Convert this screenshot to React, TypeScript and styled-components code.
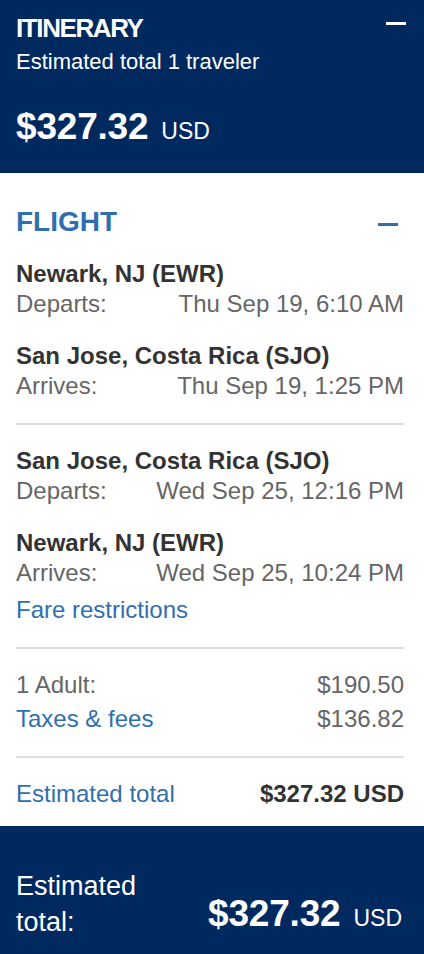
import React from 'react'
import styled, { createGlobalStyle } from 'styled-components'

const NAVY = '#002a5f'
const BLUE = '#2f6fad'

const GlobalStyle = createGlobalStyle`
  html, body {
    margin: 0;
    padding: 0;
    background: #ffffff;
  }
  body {
    font-family: "Liberation Sans", Arial, Helvetica, sans-serif;
  }
`

type Leg = {
  city: string
  label: string
  time: string
}

type Segment = Leg[]

const SEGMENTS: Segment[] = [
  [
    { city: 'Newark, NJ (EWR)', label: 'Departs:', time: 'Thu Sep 19, 6:10 AM' },
    { city: 'San Jose, Costa Rica (SJO)', label: 'Arrives:', time: 'Thu Sep 19, 1:25 PM' }
  ],
  [
    { city: 'San Jose, Costa Rica (SJO)', label: 'Departs:', time: 'Wed Sep 25, 12:16 PM' },
    { city: 'Newark, NJ (EWR)', label: 'Arrives:', time: 'Wed Sep 25, 10:24 PM' }
  ]
]

function App (): React.ReactElement {
  return (
    <>
      <GlobalStyle />
      <StyledPage>
        <StyledHeader>
          <StyledTitleRow>
            <StyledTitle>ITINERARY</StyledTitle>
            <StyledMinus $color="#ffffff" $top={9} $right={0} />
          </StyledTitleRow>
          <StyledSubtitle>Estimated total 1 traveler</StyledSubtitle>
          <StyledPrice>
            <StyledAmount>$327.32</StyledAmount>
            <StyledCurrency>USD</StyledCurrency>
          </StyledPrice>
        </StyledHeader>

        <StyledBody>
          <StyledTitleRow>
            <StyledSectionTitle>FLIGHT</StyledSectionTitle>
            <StyledMinus $color={BLUE} $top={17} $right={6} />
          </StyledTitleRow>

          {SEGMENTS.map((segment, i) => (
            <React.Fragment key={i}>
              {i > 0 && <StyledDivider />}
              <StyledSegment>
                {segment.map((leg) => (
                  <div key={leg.label}>
                    <StyledCity>{leg.city}</StyledCity>
                    <StyledRow>
                      <StyledMuted>{leg.label}</StyledMuted>
                      <StyledMuted>{leg.time}</StyledMuted>
                    </StyledRow>
                  </div>
                ))}
              </StyledSegment>
            </React.Fragment>
          ))}
          <StyledFareLink href="#">Fare restrictions</StyledFareLink>

          <StyledDivider />
          <StyledPriceList>
            <StyledRow>
              <StyledMuted>1 Adult:</StyledMuted>
              <StyledMuted>$190.50</StyledMuted>
            </StyledRow>
            <StyledRow>
              <StyledLink href="#">Taxes &amp; fees</StyledLink>
              <StyledMuted>$136.82</StyledMuted>
            </StyledRow>
          </StyledPriceList>
          <StyledDivider />
          <StyledRow>
            <StyledLink href="#">Estimated total</StyledLink>
            <StyledStrong>$327.32 USD</StyledStrong>
          </StyledRow>
        </StyledBody>

        <StyledFooter>
          <StyledFooterLabel>Estimated total:</StyledFooterLabel>
          <StyledFooterPrice>
            <StyledAmount>$327.32</StyledAmount>
            <StyledCurrency>USD</StyledCurrency>
          </StyledFooterPrice>
        </StyledFooter>
      </StyledPage>
    </>
  )
}

export default App

const StyledPage = styled.div`
  width: 424px;
  min-height: 954px;
  display: flex;
  flex-direction: column;
  background: #ffffff;
`
const StyledHeader = styled.header`
  background: ${NAVY};
  color: #ffffff;
  padding: 13px 18px 24px 16px;
`
const StyledTitleRow = styled.div`
  display: flex;
  justify-content: space-between;
  align-items: flex-start;
`
const StyledTitle = styled.h1`
  margin: 0;
  font-size: 26px;
  line-height: 30px;
  font-weight: 700;
  letter-spacing: -1.4px;
`
const StyledMinus = styled.span<{ $color: string, $top: number, $right: number }>`
  display: block;
  width: 20px;
  height: 3px;
  margin-top: ${(p) => p.$top}px;
  margin-right: ${(p) => p.$right}px;
  background: ${(p) => p.$color};
`
const StyledSubtitle = styled.div`
  margin-top: 6px;
  font-size: 22px;
  line-height: 26px;
`
const StyledPrice = styled.div`
  margin-top: 30px;
  display: flex;
  align-items: baseline;
`
const StyledAmount = styled.span`
  font-size: 37px;
  line-height: 44px;
  font-weight: 700;
  letter-spacing: -0.2px;
`
const StyledCurrency = styled.span`
  margin-left: 13px;
  font-size: 23px;
`
const StyledBody = styled.main`
  padding: 33px 20px 17px 16px;
  color: #333333;
  font-size: 24px;
  line-height: 30px;
`
const StyledSectionTitle = styled.h2`
  margin: 0 0 21px 0;
  font-size: 28px;
  line-height: 32px;
  font-weight: 700;
  color: ${BLUE};
`
const StyledSegment = styled.div`
  display: flex;
  flex-direction: column;
  gap: 22px;
`
const StyledCity = styled.div`
  font-weight: 700;
  color: #333333;
`
const StyledRow = styled.div`
  display: flex;
  justify-content: space-between;
  align-items: baseline;
`
const StyledMuted = styled.span`
  color: #666666;
`
const StyledStrong = styled.span`
  font-weight: 700;
  color: #333333;
`
const StyledLink = styled.a`
  color: ${BLUE};
  text-decoration: none;
`
const StyledFareLink = styled(StyledLink)`
  display: block;
  margin-top: 7px;
`
const StyledDivider = styled.hr`
  margin: 22px 0 21px 0;
  border: 0;
  height: 2px;
  background: #dddddd;
`
const StyledPriceList = styled.div`
  display: flex;
  flex-direction: column;
  gap: 4px;
  margin-bottom: 4px;
`
const StyledFooter = styled.footer`
  flex: 1;
  background: ${NAVY};
  color: #ffffff;
  padding: 42px 22px 14px 16px;
  display: flex;
  justify-content: space-between;
  align-items: flex-end;
`
const StyledFooterLabel = styled.div`
  width: 150px;
  font-size: 27px;
  line-height: 36px;
`
const StyledFooterPrice = styled.div`
  display: flex;
  align-items: baseline;
  margin-bottom: 4px;
`
